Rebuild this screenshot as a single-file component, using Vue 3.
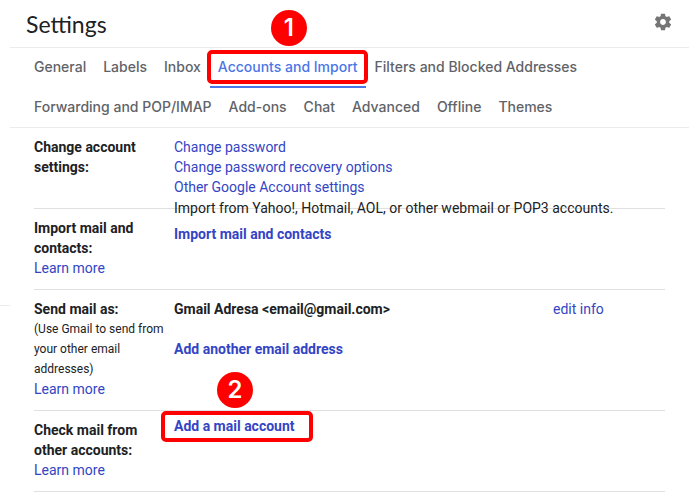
<script setup>
const tabs = [
  { label: 'General' },
  { label: 'Labels' },
  { label: 'Inbox' },
  { label: 'Accounts and Import', active: true },
  { label: 'Filters and Blocked Addresses' },
  { label: 'Forwarding and POP/IMAP' },
  { label: 'Add-ons' },
  { label: 'Chat' },
  { label: 'Advanced' },
  { label: 'Offline' },
  { label: 'Themes' },
]
</script>

<template>
  <div class="page">
    <div class="rail"></div>
    <main class="panel">
      <header class="header">
        <h1>Settings</h1>
        <button class="gear" type="button" aria-label="Settings">
          <svg viewBox="0 0 24 24" width="20" height="20" aria-hidden="true">
            <path
              fill="#757575"
              d="M19.43 12.98c.04-.32.07-.64.07-.98s-.03-.66-.07-.98l2.11-1.65c.19-.15.24-.42.12-.64l-2-3.46c-.12-.22-.39-.3-.61-.22l-2.49 1c-.52-.4-1.08-.73-1.69-.98l-.38-2.65C14.46 2.18 14.25 2 14 2h-4c-.25 0-.46.18-.49.42l-.38 2.65c-.61.25-1.17.59-1.69.98l-2.49-1c-.23-.09-.49 0-.61.22l-2 3.46c-.13.22-.07.49.12.64l2.11 1.65c-.04.32-.07.65-.07.98s.03.66.07.98l-2.11 1.65c-.19.15-.24.42-.12.64l2 3.46c.12.22.39.3.61.22l2.49-1c.52.4 1.08.73 1.69.98l.38 2.65c.03.24.24.42.49.42h4c.25 0 .46-.18.49-.42l.38-2.65c.61-.25 1.17-.59 1.69-.98l2.49 1c.23.09.49 0 .61-.22l2-3.46c.12-.22.07-.49-.12-.64l-2.11-1.65zM12 15.5c-1.93 0-3.5-1.57-3.5-3.5s1.57-3.5 3.5-3.5 3.5 1.57 3.5 3.5-1.57 3.5-3.5 3.5z"
            />
          </svg>
        </button>
      </header>

      <nav class="tabs">
        <a
          v-for="tab in tabs"
          :key="tab.label"
          href="#"
          class="tab"
          :class="{ active: tab.active }"
        >
          {{ tab.label }}
          <template v-if="tab.active">
            <span class="frame"></span>
            <span class="badge">1</span>
          </template>
        </a>
      </nav>

      <div class="rows">
        <section class="row">
          <div>
            <h2>Change account settings:</h2>
          </div>
          <div class="stack">
            <a href="#">Change password</a>
            <a href="#">Change password recovery options</a>
            <a href="#">Other Google Account settings</a>
          </div>
        </section>

        <section class="row">
          <div>
            <h2>Import mail and contacts:</h2>
            <a href="#">Learn more</a>
          </div>
          <div class="stack import">
            <p>Import from Yahoo!, Hotmail, AOL, or other webmail or POP3 accounts.</p>
            <a href="#" class="strong">Import mail and contacts</a>
          </div>
        </section>

        <section class="row">
          <div>
            <h2>Send mail as:</h2>
            <p class="note">(Use Gmail to send from your other email addresses)</p>
            <a href="#">Learn more</a>
          </div>
          <div class="stack senders">
            <div class="sender">
              <span class="strong">Gmail Adresa &lt;email@gmail.com&gt;</span>
              <a href="#">edit info</a>
            </div>
            <a href="#" class="strong">Add another email address</a>
          </div>
        </section>

        <section class="row">
          <div>
            <h2>Check mail from other accounts:</h2>
            <a href="#">Learn more</a>
          </div>
          <div class="stack check">
            <a href="#" class="strong marked">
              Add a mail account
              <span class="frame"></span>
              <span class="badge">2</span>
            </a>
          </div>
        </section>
      </div>
    </main>
  </div>
</template>

<style>
body {
  margin: 0;
  background: #fff;
}
</style>

<style scoped>
.page {
  display: grid;
  grid-template-columns: 10px 1fr;
  padding-right: 11px;
  font-family: Roboto, "Liberation Sans", sans-serif;
  font-size: 14px;
  line-height: 20px;
  color: #202124;
}
.rail {
  height: 305px;
  border-bottom: 1px solid #ececec;
}
.header {
  display: flex;
  align-items: center;
  justify-content: space-between;
  height: 47px;
  padding: 0 16px;
  border-bottom: 1px solid #ececec;
}
h1,
h2,
p {
  margin: 0;
}
h1 {
  font-family: Lato, sans-serif;
  font-size: 23px;
  font-weight: 400;
  line-height: 28px;
}
.gear {
  display: flex;
  margin: 0 0 4px;
  padding: 0;
  border: 0;
  background: none;
}
.tabs {
  display: flex;
  flex-wrap: wrap;
  column-gap: 1px;
  padding: 0 16px;
  box-shadow: inset 0 -1px #ececec;
  font-family: Inter, sans-serif;
  font-weight: 500;
}
.tab {
  position: relative;
  box-sizing: border-box;
  height: 40px;
  padding: 9px 8px;
  color: #5f6368;
  white-space: nowrap;
}
.tab.active {
  border-bottom: 2px solid #4a76e8;
  color: #4a76e8;
}
a {
  color: #3345c4;
  text-decoration: none;
}
.rows {
  padding: 0 24px;
}
.row {
  display: grid;
  grid-template-columns: 140px 1fr;
  padding: 9px 0 11px;
  border-bottom: 1px solid #e0e0e0;
}
h2 {
  padding-right: 8px;
  font-size: 14px;
  font-weight: 700;
  line-height: 20px;
}
.note {
  font-size: 12px;
}
.stack {
  display: flex;
  flex-direction: column;
  align-items: flex-start;
}
.import {
  gap: 6px;
  margin-top: -20px;
}
.senders {
  gap: 20px;
}
.sender {
  display: grid;
  grid-template-columns: 1fr 112px;
  align-self: stretch;
}
.strong {
  font-weight: 700;
}
.check {
  margin-top: -4px;
}
.marked {
  position: relative;
}
.frame {
  position: absolute;
  box-sizing: border-box;
  border: 4px solid #fe0000;
  border-radius: 5px;
}
.tab .frame {
  inset: 2px -2px 2px -3px;
}
.marked .frame {
  inset: -5px -18px -6px -13px;
}
.badge {
  position: absolute;
  width: 36px;
  height: 36px;
  border-radius: 50%;
  background: #fe0000;
  color: #fff;
  font-family: Inter, sans-serif;
  font-size: 24px;
  font-weight: 600;
  line-height: 36px;
  text-align: center;
}
.tab .badge {
  top: -38px;
  left: 61px;
}
.marked .badge {
  top: -44px;
  left: 43px;
}
</style>
